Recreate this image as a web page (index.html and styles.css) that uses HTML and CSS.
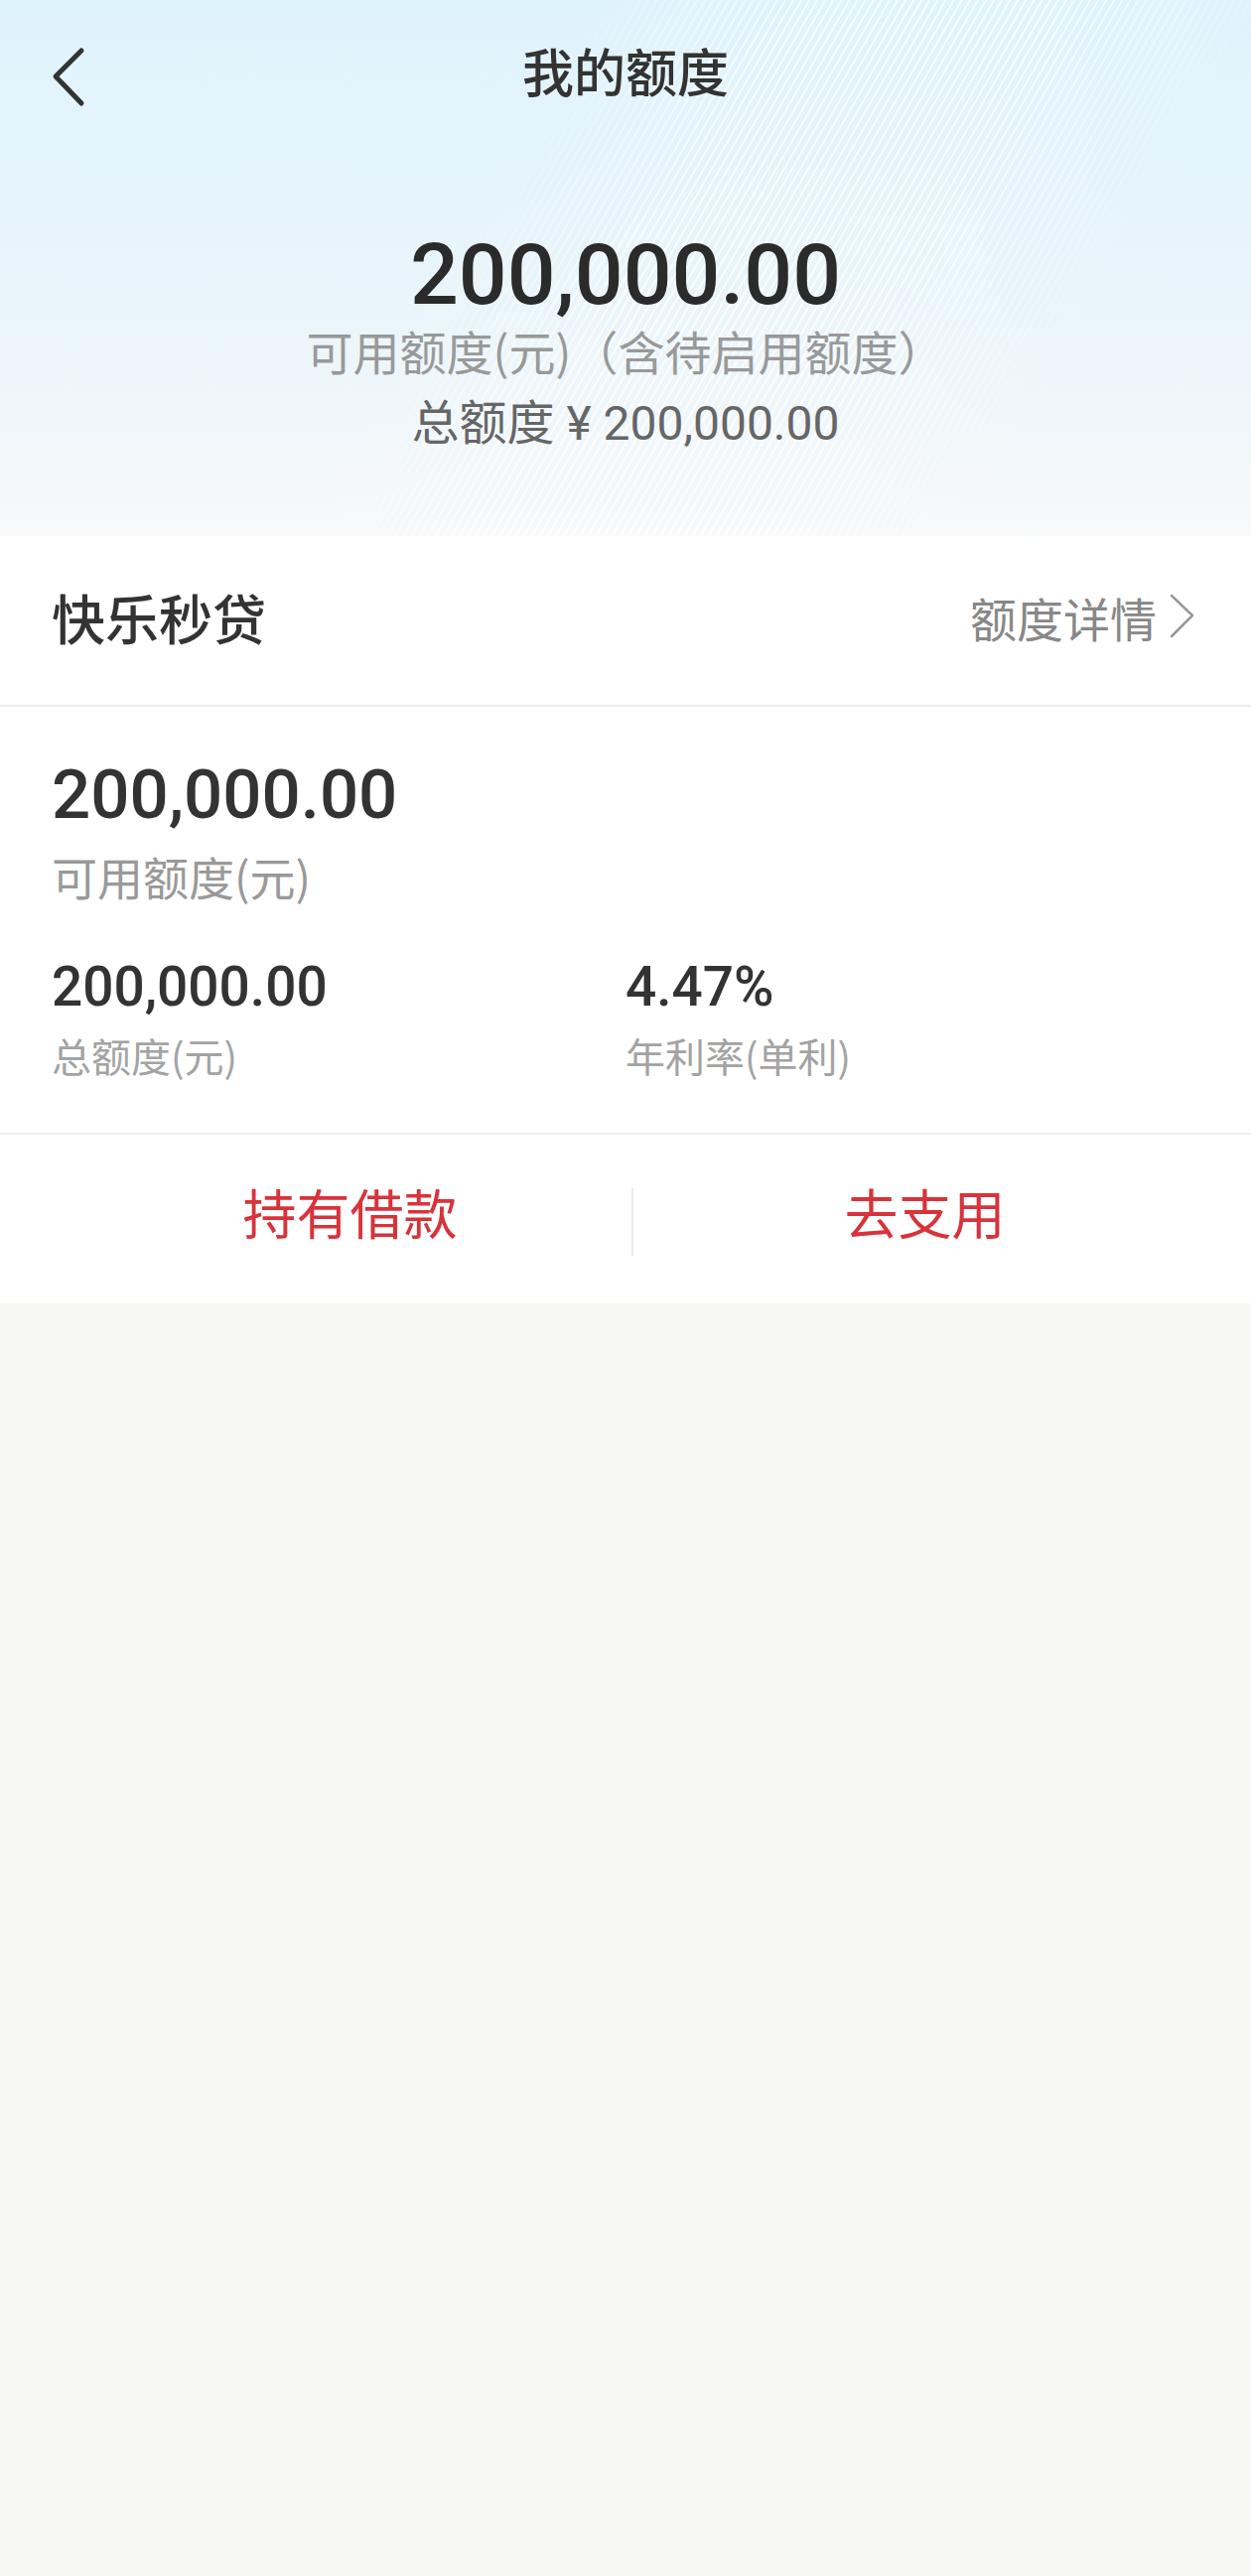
FILE: index.html
```html
<!DOCTYPE html>
<html lang="zh-CN">
<head>
    <meta charset="UTF-8">
    <meta name="viewport" content="width=device-width, initial-scale=1.0">
    <title>我的额度</title>
    <link rel="stylesheet" href="styles.css">
</head>
<body>
    <div class="hero">
        <div class="nav">
            <div class="nav-back">
                <svg width="40" height="64" viewBox="0 0 40 64">
                    <polyline points="32,6 6,32 32,59" fill="none" stroke="#333" stroke-width="5" stroke-linecap="round" stroke-linejoin="round"/>
                </svg>
            </div>
            <h1 class="nav-title">我的额度</h1>
            <div></div>
        </div>
        <div class="hero-amount">200,000.00</div>
        <p class="hero-label">可用额度(元)（含待启用额度）</p>
        <p class="hero-total">总额度 ¥ 200,000.00</p>
    </div>

    <div class="card">
        <div class="card-head">
            <span class="card-name">快乐秒贷</span>
            <span class="card-link">额度详情
                <svg width="30" height="48" viewBox="0 0 30 48">
                    <polyline points="5,3 26,23 5,44" fill="none" stroke="#999" stroke-width="2.5" stroke-linecap="round" stroke-linejoin="round"/>
                </svg>
            </span>
        </div>

        <div class="card-body">
            <div class="amount">200,000.00</div>
            <p class="label">可用额度(元)</p>

            <div class="stats">
                <div>
                    <div class="stat-value">200,000.00</div>
                    <p class="stat-label">总额度(元)</p>
                </div>
                <div>
                    <div class="stat-value">4.47%</div>
                    <p class="stat-label">年利率(单利)</p>
                </div>
            </div>
        </div>

        <div class="actions">
            <a class="action" href="#">持有借款</a>
            <span class="action-divider"></span>
            <a class="action" href="#">去支用</a>
        </div>
    </div>
</body>
</html>
```

FILE: styles.css
```css
body {
    margin: 0;
    padding: 0;
    min-height: 100vh;
    background: #f7f7f5;
    font-family: "Noto Sans CJK SC", sans-serif;
    color: #333;
}
p {
    margin: 0;
}

/* top area */
.hero {
    position: relative;
    height: 540px;
    text-align: center;
    background: linear-gradient(180deg, #dff3fc 0%, #e9f5fb 55%, #f4f8fa 92%, #f8fafb 100%);
    overflow: hidden;
}
.hero::before {
    content: "";
    position: absolute;
    inset: 0;
    background: repeating-linear-gradient(120deg, rgba(255, 255, 255, 0) 0, rgba(255, 255, 255, 0) 5px, rgba(255, 255, 255, 0.75) 5px, rgba(255, 255, 255, 0.75) 7px);
    -webkit-mask-image: linear-gradient(120deg, transparent 38%, #000 52%, #000 68%, transparent 82%);
    mask-image: linear-gradient(120deg, transparent 38%, #000 52%, #000 68%, transparent 82%);
    pointer-events: none;
}
.hero > * {
    position: relative;
}
.nav {
    display: grid;
    grid-template-columns: 1fr auto 1fr;
    align-items: center;
    height: 142px;
}
.nav-back {
    display: flex;
    padding-left: 50px;
    padding-top: 12px;
}
.nav-title {
    margin: 0;
    font-size: 52px;
    font-weight: 500;
    line-height: 142px;
    color: #333;
}
.hero-amount {
    margin-top: 92px;
    font-family: Roboto, sans-serif;
    font-size: 86px;
    font-weight: 500;
    line-height: 86px;
    color: #2b2b2b;
}
.hero-label {
    margin-top: 3px;
    font-size: 47px;
    line-height: 60px;
    color: #999;
}
.hero-total {
    margin-top: 14px;
    font-family: Roboto, "Noto Sans CJK SC", sans-serif;
    font-size: 48px;
    line-height: 60px;
    color: #666;
}

/* product card */
.card {
    background: #fff;
}
.card-head {
    display: flex;
    align-items: center;
    justify-content: space-between;
    height: 162px;
    padding: 0 55px 8px 52px;
    border-bottom: 2px solid #eee;
}
.card-name {
    font-size: 54px;
    font-weight: 500;
    color: #333;
}
.card-link {
    display: flex;
    align-items: center;
    gap: 10px;
    font-size: 47px;
    color: #888;
}
.card-body {
    padding: 54px 52px 50px;
    border-bottom: 2px solid #eee;
}
.amount {
    font-family: Roboto, sans-serif;
    font-size: 69px;
    font-weight: 500;
    line-height: 70px;
    color: #333;
}
.label {
    margin-top: 16px;
    font-size: 46px;
    line-height: 60px;
    color: #999;
}
.stats {
    display: grid;
    grid-template-columns: 1fr 1fr;
    margin-top: 55px;
}
.stat-value {
    font-family: Roboto, sans-serif;
    font-size: 55px;
    font-weight: 500;
    line-height: 55px;
    color: #333;
}
.stat-label {
    margin-top: 13px;
    font-size: 40px;
    line-height: 56px;
    color: #a3a3a3;
}

.actions {
    display: flex;
    align-items: flex-start;
    height: 170px;
    padding: 0 45px 0 59px;
}
.action {
    flex: 1;
    padding-left: 10px;
    text-align: center;
    font-size: 54px;
    line-height: 156px;
    color: #d8333b;
    text-decoration: none;
}
.action-divider {
    width: 2px;
    height: 68px;
    margin-top: 54px;
    background: #ebebeb;
}
```
